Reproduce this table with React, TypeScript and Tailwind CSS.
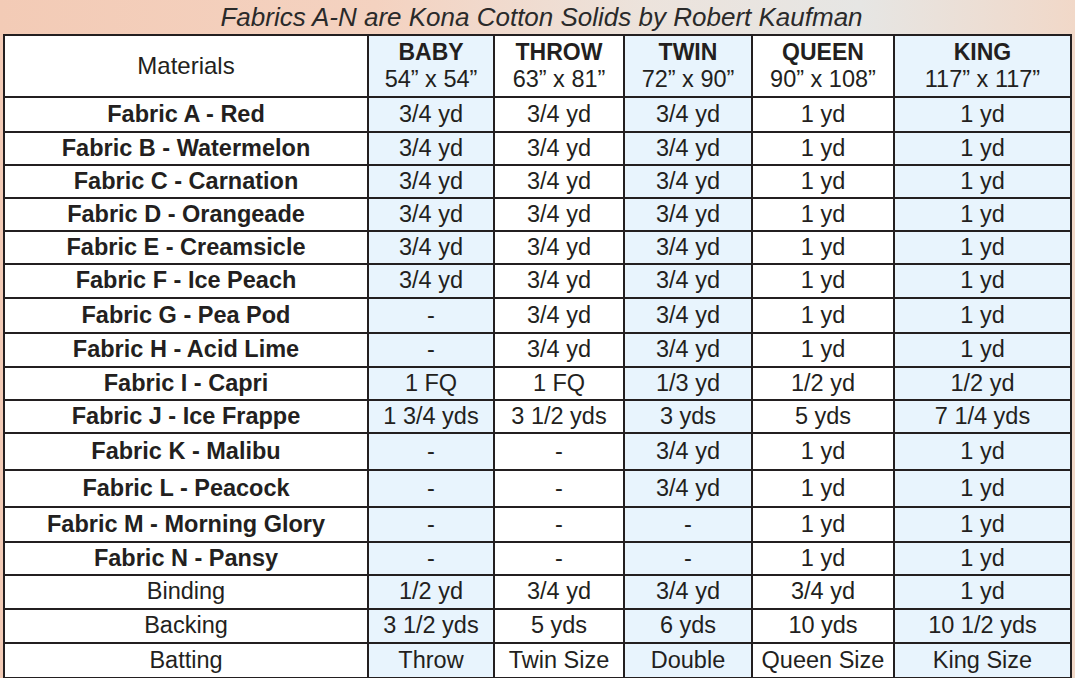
import React from "react";

const cols = ["BABY", "THROW", "TWIN", "QUEEN", "KING"];
const dims = ["54\u201d x 54\u201d", "63\u201d x 81\u201d", "72\u201d x 90\u201d", "90\u201d x 108\u201d", "117\u201d x 117\u201d"];

type Row = { label: string; bold: boolean; vals: string[]; h: number };

const rows: Row[] = [
  { label: "Fabric A - Red", bold: true, vals: ["3/4 yd", "3/4 yd", "3/4 yd", "1 yd", "1 yd"], h: 35 },
  { label: "Fabric B - Watermelon", bold: true, vals: ["3/4 yd", "3/4 yd", "3/4 yd", "1 yd", "1 yd"], h: 33 },
  { label: "Fabric C - Carnation", bold: true, vals: ["3/4 yd", "3/4 yd", "3/4 yd", "1 yd", "1 yd"], h: 33 },
  { label: "Fabric D - Orangeade", bold: true, vals: ["3/4 yd", "3/4 yd", "3/4 yd", "1 yd", "1 yd"], h: 33 },
  { label: "Fabric E - Creamsicle", bold: true, vals: ["3/4 yd", "3/4 yd", "3/4 yd", "1 yd", "1 yd"], h: 33 },
  { label: "Fabric F - Ice Peach", bold: true, vals: ["3/4 yd", "3/4 yd", "3/4 yd", "1 yd", "1 yd"], h: 34 },
  { label: "Fabric G - Pea Pod", bold: true, vals: ["-", "3/4 yd", "3/4 yd", "1 yd", "1 yd"], h: 35 },
  { label: "Fabric H - Acid Lime", bold: true, vals: ["-", "3/4 yd", "3/4 yd", "1 yd", "1 yd"], h: 34 },
  { label: "Fabric I - Capri", bold: true, vals: ["1 FQ", "1 FQ", "1/3 yd", "1/2 yd", "1/2 yd"], h: 33 },
  { label: "Fabric J - Ice Frappe", bold: true, vals: ["1 3/4 yds", "3 1/2 yds", "3 yds", "5 yds", "7 1/4 yds"], h: 33 },
  { label: "Fabric K - Malibu", bold: true, vals: ["-", "-", "3/4 yd", "1 yd", "1 yd"], h: 37 },
  { label: "Fabric L - Peacock", bold: true, vals: ["-", "-", "3/4 yd", "1 yd", "1 yd"], h: 37 },
  { label: "Fabric M - Morning Glory", bold: true, vals: ["-", "-", "-", "1 yd", "1 yd"], h: 35 },
  { label: "Fabric N - Pansy", bold: true, vals: ["-", "-", "-", "1 yd", "1 yd"], h: 33 },
  { label: "Binding", bold: false, vals: ["1/2 yd", "3/4 yd", "3/4 yd", "3/4 yd", "1 yd"], h: 34 },
  { label: "Backing", bold: false, vals: ["3 1/2 yds", "5 yds", "6 yds", "10 yds", "10 1/2 yds"], h: 34 },
  { label: "Batting", bold: false, vals: ["Throw", "Twin Size", "Double", "Queen Size", "King Size"], h: 35 },
];

const shaded = [true, false, true, false, true];
const widths = ["w-[126px]", "w-[130px]", "w-[128px]", "w-[142px]", "w-[177px]"];

export default function App() {
  return (
    <div
      className="w-[1075px] h-[678px] overflow-hidden bg-[linear-gradient(90deg,#f3cbb6_0%,#f4d2c0_35%,#ece3dc_60%,#e6e6e4_80%,#f1d8c8_100%)] text-[#231f20]"
      style={{ fontFamily: '"Liberation Sans", Arial, sans-serif' }}
    >
      <div className="h-[34px] flex items-center justify-center text-[26px] italic text-[#2a2a2a] pl-[8px] leading-none">
        Fabrics A-N are Kona Cotton Solids by Robert Kaufman
      </div>
      <table className="ml-[3px] border-collapse border-2 border-[#231f20] table-fixed w-[1068px]">
        <thead>
          <tr className="h-[62px]">
            <th className="w-[364px] border-2 border-[#231f20] bg-white font-normal text-[24px] leading-none">Materials</th>
            {cols.map((c, i) => (
              <th
                key={c}
                className={`${widths[i]} border-2 border-[#231f20] ${shaded[i] ? "bg-[#e8f4fd]" : "bg-white"} font-normal leading-[27px] p-0`}
              >
                <div className="text-[23px] font-bold">{c}</div>
                <div className="text-[23.5px]">{dims[i]}</div>
              </th>
            ))}
          </tr>
        </thead>
        <tbody>
          {rows.map((r) => (
            <tr key={r.label} style={{ height: r.h }}>
              <td className={`border-2 border-[#231f20] bg-white text-center leading-none p-0 ${r.bold ? "font-bold text-[23.5px]" : "text-[23.5px]"}`}>
                {r.label}
              </td>
              {r.vals.map((v, i) => (
                <td
                  key={i}
                  className={`border-2 border-[#231f20] ${shaded[i] ? "bg-[#e8f4fd]" : "bg-white"} text-center text-[23.5px] leading-none p-0`}
                >
                  {v}
                </td>
              ))}
            </tr>
          ))}
        </tbody>
      </table>
    </div>
  );
}
